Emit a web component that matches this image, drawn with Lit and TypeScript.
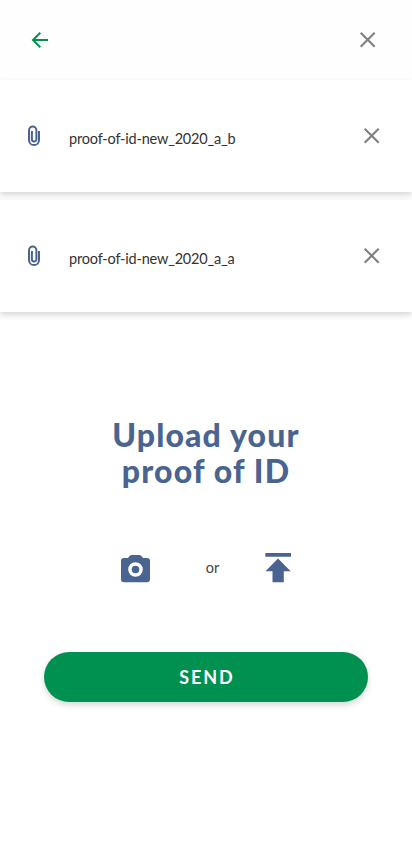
import { LitElement, html, css } from "lit";
import { customElement, property } from "lit/decorators.js";

const cross = html`<svg class="cross" width="16" height="16" viewBox="0 0 16 16"><path d="M.700.700L14.700 14.700M14.700.700L.700 14.700" stroke="#808080" stroke-width="2.100" fill="none"/></svg>`;

@customElement("file-row")
class FileRow extends LitElement {
  @property() name = "";
  static styles = css`
    :host { display: flex; align-items: center; box-sizing: border-box; height: 112px; padding: 0 32px 0 22px; background: #fff; box-shadow: 0 3px 6px rgba(0, 0, 0, 0.16); }
    .clip { width: 24px; height: 24px; flex: none; fill: none; stroke: #4a6491; stroke-width: 2; }
    .name { flex: 1; margin: 6px 0 0 23px; font-size: 14.5px; line-height: 20px; letter-spacing: -0.19px; color: #333; white-space: nowrap; }
    .cross { display: block; flex: none; overflow: visible; }
  `;
  render() {
    return html`
      <svg class="clip" viewBox="0 0 24 24"><path d="M17 7v8.900a5 5.200 0 0 1-10 0V6.300a3.700 3.700 0 0 1 7.400 0v9a2.250 2.250 0 0 1-4.500 0V7"/></svg>
      <span class="name">${this.name}</span>${cross}`;
  }
}

@customElement("app-root")
class AppRoot extends LitElement {
  static styles = css`
    :host { display: flex; flex-direction: column; box-sizing: border-box; height: 847px; background: #fff; font-family: Lato, "Liberation Sans", sans-serif; }
    header { display: flex; align-items: center; justify-content: space-between; box-sizing: border-box; height: 80px; padding: 0 36px 0 32px; background: #fefefe; }
    header svg, .actions svg { display: block; flex: none; overflow: visible; }
    .files { display: flex; flex-direction: column; gap: 8px; }
    h1 { margin: 105px 0 0; text-align: center; font-size: 32px; line-height: 36px; font-weight: 900; letter-spacing: 1.15px; color: #4a6491; }
    .actions { display: flex; align-items: center; height: 32px; margin: 64px 121px 0 121px; }
    .actions span { flex: 1; padding-left: 10px; text-align: center; font-size: 14.5px; line-height: 20px; color: #444; margin-top: -3px; }
    button { height: 50px; margin: 67px 44px 0; padding: 0 0 0 2px; border: 0; border-radius: 25px; background: #009150; color: #fff; font: 700 18px/50px Lato, "Liberation Sans", sans-serif; letter-spacing: 1.9px; box-shadow: 0 3px 6px rgba(0, 0, 0, 0.16); }
  `;
  render() {
    return html`
      <header>
        <svg width="16" height="16" viewBox="0 0 16 16"><path d="M16 8H1.500M8.300.700L1 8l7.300 7.300" fill="none" stroke="#009150" stroke-width="2"/></svg>
        ${cross}
      </header>
      <div class="files">
        <file-row name="proof-of-id-new_2020_a_b"></file-row>
        <file-row name="proof-of-id-new_2020_a_a"></file-row>
      </div>
      <h1>Upload your<br />proof of ID</h1>
      <div class="actions">
        <svg width="29" height="32" viewBox="0 0 29 32" fill="#4a6491"><path fill-rule="evenodd" d="M3 5h4l1.500-2Q9.500 2 11 2h7q1.500 0 2.500 1L22 5h4a3 3 0 0 1 3 3v18.300a3 3 0 0 1-3 3H3a3 3 0 0 1-3-3V8a3 3 0 0 1 3-3zM14.500 9.200a7.300 7.300 0 1 0 0 14.600 7.300 7.300 0 0 0 0-14.600z"/><circle cx="14.500" cy="16.500" r="3.800"/></svg>
        <span>or</span>
        <svg width="26" height="32" viewBox="0 0 26 32" fill="#4a6491"><path d="M.300 0h25.700v3.700H.300zM13 5.500L25.700 18.200H18.800v11H7.500v-11H.500z"/></svg>
      </div>
      <button>SEND</button>`;
  }
}
